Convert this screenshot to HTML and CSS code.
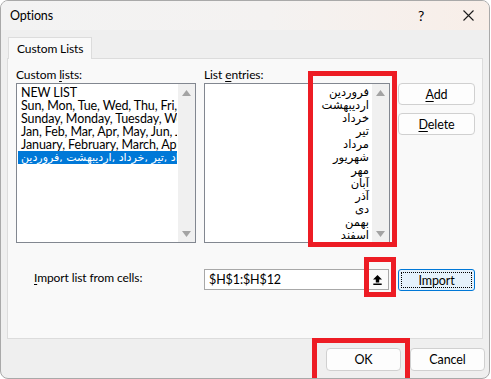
FILE: index.html
```html
<!doctype html>
<html lang="en">
<head>
	<meta charset="UTF-8">
	<title>Options</title>
	<link rel="stylesheet" href="styles.css">
</head>
<body>
	<div class="window">
		<div class="titlebar">
			<span class="title">Options</span>
			<span class="help">?</span>
			<span class="close">
				<svg width="11" height="11" viewBox="0 0 11 11"><path d="M0.5 0.5 L10.5 10.5 M10.5 0.5 L0.5 10.5" stroke="#1b1b1b" stroke-width="1.1" fill="none"/></svg>
			</span>
		</div>
		<div class="body">
			<div class="tabs">
				<div class="tab">Custom Lists</div>
			</div>
			<div class="panel">
				<div class="lists">
					<div class="lbl">Custom <u>l</u>ists:</div>
					<div class="lbl">List <u>e</u>ntries:</div>
					<div></div>

					<div class="listbox">
						<div class="items">
							<div class="item">NEW LIST</div>
							<div class="item">Sun, Mon, Tue, Wed, Thu, Fri, Sat</div>
							<div class="item">Sunday, Monday, Tuesday, Wednesday, Thursday</div>
							<div class="item">Jan, Feb, Mar, Apr, May, Jun, Jul, Aug</div>
							<div class="item">January, February, March, April, May</div>
							<div class="item selected" dir="ltr"><bdi>فروردین</bdi>, <bdi>اردیبهشت</bdi>, <bdi>خرداد</bdi>, <bdi>تیر</bdi>, <bdi>مرداد</bdi>, <bdi>شهریور</bdi>, <bdi>مهر</bdi></div>
						</div>
						<div class="scroll">
							<svg width="9" height="6" viewBox="0 0 9 6"><path d="M0 6 L4.5 0 L9 6 Z" fill="#a3a3a3"/></svg>
							<svg width="9" height="6" viewBox="0 0 9 6"><path d="M0 0 L4.5 6 L9 0 Z" fill="#a3a3a3"/></svg>
						</div>
					</div>

					<div class="listbox">
						<div class="items entries" dir="rtl">
							<div class="item">فروردین</div>
							<div class="item">اردیبهشت</div>
							<div class="item">خرداد</div>
							<div class="item">تیر</div>
							<div class="item">مرداد</div>
							<div class="item">شهریور</div>
							<div class="item">مهر</div>
							<div class="item">آبان</div>
							<div class="item">آذر</div>
							<div class="item">دی</div>
							<div class="item">بهمن</div>
							<div class="item">اسفند</div>
						</div>
						<div class="scroll">
							<svg width="9" height="6" viewBox="0 0 9 6"><path d="M0 6 L4.5 0 L9 6 Z" fill="#a3a3a3"/></svg>
							<svg width="9" height="6" viewBox="0 0 9 6"><path d="M0 0 L4.5 6 L9 0 Z" fill="#a3a3a3"/></svg>
						</div>
					</div>

					<div class="side">
						<button class="btn"><u>A</u>dd</button>
						<button class="btn"><u>D</u>elete</button>
					</div>
				</div>

				<div class="import-row">
					<div class="import-lbl"><u>I</u>mport list from cells:</div>
					<div class="ref">
						<span class="ref-text">$H$1:$H$12</span>
						<span class="collapse">
							<svg width="9" height="10" viewBox="0 0 9 10"><path d="M4.5 0 L9 4.5 H6.2 V7.6 H2.8 V4.5 H0 Z" fill="#000"/><rect x="0.3" y="8.5" width="8.4" height="1.5" fill="#000"/></svg>
						</span>
					</div>
					<button class="btn btn-focus"><span>I<u>m</u>port</span></button>
				</div>
			</div>
			<div class="footer">
				<button class="btn">OK</button>
				<button class="btn">Cancel</button>
			</div>
		</div>

		<!-- red callouts drawn over the dialog -->
		<div class="mark mark-entries"></div>
		<div class="mark mark-collapse"></div>
		<div class="mark mark-ok"></div>
	</div>
</body>
</html>
```

FILE: styles.css
```css
* {
	box-sizing: border-box;
}
body {
	margin: 0;
	background: #fff;
	font-family: Lato, "DejaVu Sans", sans-serif;
	font-size: 12px;
	letter-spacing: -0.1px;
	color: #000;
}
u {
	text-decoration-thickness: 1px;
	text-underline-offset: 2px;
}
.window {
	position: relative;
	width: 490px;
	height: 379px;
	border: 1px solid #a9a9a9;
	border-radius: 8px;
	background: #efefef;
	overflow: hidden;
}
.titlebar {
	display: flex;
	align-items: center;
	height: 29px;
	padding-left: 9px;
	background: linear-gradient(to right, #f3f3f3 0%, #f4f2f1 55%, #f8eee8 100%);
}
.title {
	flex: 1;
	font-size: 12.5px;
}
.help {
	width: 12px;
	margin-right: 33px;
	font-size: 14px;
}
.close {
	display: flex;
	margin-right: 15px;
}
.body {
	padding: 7px 6px 0 6px;
}
.tabs {
	display: flex;
}
.tab {
	position: relative;
	z-index: 1;
	margin-left: 1px;
	margin-bottom: -1px;
	height: 22px;
	padding: 3px 8px 0 8px;
	background: #f9f9f9;
	border: 1px solid #dcdcdc;
	border-bottom: none;
}
.panel {
	height: 281px;
	background: #f9f9f9;
	border: 1px solid #dcdcdc;
	padding: 8px 0 0 8px;
}
.lists {
	display: grid;
	grid-template-columns: 180px 186px 77px;
	grid-template-rows: 16px 160px;
	column-gap: 8px;
}
.lbl {
	line-height: 15px;
}
.listbox {
	display: flex;
	background: #fff;
	border: 1px solid #828790;
	overflow: hidden;
}
.items {
	flex: 1;
	min-width: 0;
	padding: 2px 1px 0 1px;
}
.item {
	height: 13px;
	line-height: 13px;
	padding-left: 3px;
	font-size: 12.5px;
	white-space: nowrap;
	overflow: hidden;
}
.item.selected {
	background: #0078d7;
	color: #fff;
	text-align: left;
	font-family: "DejaVu Sans", sans-serif;
	font-size: 11px;
}
.entries .item {
	padding-right: 2px;
	font-family: "DejaVu Sans", sans-serif;
	font-size: 11.5px;
}
.scroll {
	display: flex;
	flex-direction: column;
	justify-content: space-between;
	align-items: center;
	width: 17px;
	padding: 6px 0 5px 0;
	background: #f0f0f0;
}
.side {
	display: flex;
	flex-direction: column;
	gap: 8px;
}
.btn {
	width: 77px;
	height: 22px;
	padding: 0;
	font-family: inherit;
	font-size: 12.5px;
	letter-spacing: -0.1px;
	color: #000;
	background: #fdfdfd;
	border: 1px solid #d0d0d0;
	border-radius: 4px;
}
.import-row {
	display: grid;
	grid-template-columns: 180px 186px 77px;
	column-gap: 8px;
	margin-top: 26px;
	align-items: start;
}
.import-lbl {
	padding-left: 18px;
	line-height: 16px;
	margin-top: 1px;
}
.ref {
	display: flex;
	width: 185px;
	height: 21px;
	background: #fff;
	border: 1px solid #a8a8a8;
}
.ref-text {
	flex: 1;
	padding-left: 4px;
	line-height: 19px;
	font-size: 12.5px;
}
.collapse {
	display: flex;
	align-items: center;
	justify-content: center;
	width: 22px;
	background: #fbfbfb;
	border-left: 1px solid #c8c8c8;
}
.btn-focus {
	background: #e5f1fb;
	border-color: #0078d7;
	border-radius: 3px;
	padding: 2px;
}
.btn-focus span {
	display: block;
	height: 100%;
	line-height: 16px;
	border: 1px dotted #000;
}
.footer {
	display: flex;
	justify-content: flex-end;
	gap: 9px;
	margin-top: 9px;
	margin-right: -2px;
}
.footer .btn {
	width: 75px;
	height: 23px;
}
.mark {
	position: absolute;
	border: 5px solid #ed1c24;
}
.mark-entries {
	left: 307px;
	top: 70px;
	width: 89px;
	height: 176px;
}
.mark-collapse {
	left: 363px;
	top: 256px;
	width: 32px;
	height: 40px;
}
.mark-ok {
	left: 311px;
	top: 337px;
	width: 98px;
	height: 45px;
}
```
